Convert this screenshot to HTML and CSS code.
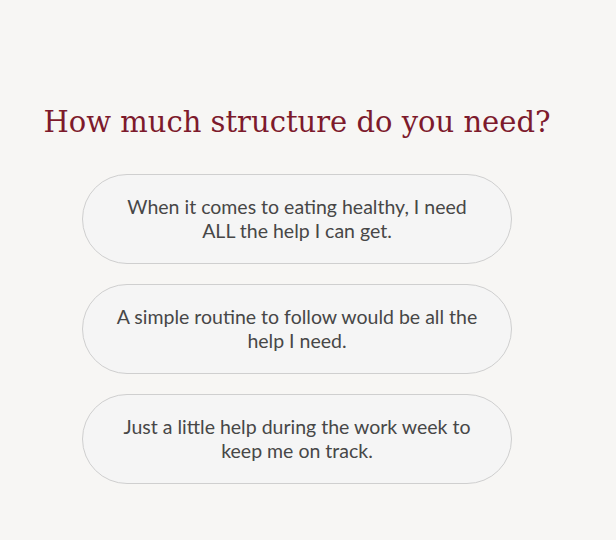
FILE: index.html
```html
<!DOCTYPE html>
<html lang="en">
<head>
    <meta charset="UTF-8">
    <title>How much structure do you need?</title>
    <link rel="stylesheet" href="styles.css">
</head>
<body>
<div class="quiz">
    <h1 class="quiz_title">How much structure do you need?</h1>
    <div class="answers">
        <button class="answer">When it comes to eating healthy, I need ALL the help I can get.</button>
        <button class="answer">A simple routine to follow would be all the help I need.</button>
        <button class="answer">Just a little help during the work week to keep me on track.</button>
    </div>
</div>
</body>
</html>
```

FILE: styles.css
```css
body {
    margin: 0;
    background: #f7f6f4;
}

.quiz {
    width: 594px;
    padding-top: 102px;
}

.quiz_title {
    margin: 0 0 32px;
    text-align: center;
    font-family: "DejaVu Serif", serif;
    font-weight: normal;
    font-size: 29px;
    line-height: 40px;
    color: #7d1a2c;
}

.answers {
    display: flex;
    flex-direction: column;
    align-items: center;
    gap: 20px;
}

.answer {
    width: 430px;
    height: 90px;
    padding: 0 30px;
    border: solid 1px #cfcfcf;
    border-radius: 45px;
    background: #f5f5f5;
    font-family: Lato, "Liberation Sans", sans-serif;
    font-size: 19.5px;
    line-height: 24px;
    color: #474747;
    text-align: center;
    cursor: pointer;
}
```
